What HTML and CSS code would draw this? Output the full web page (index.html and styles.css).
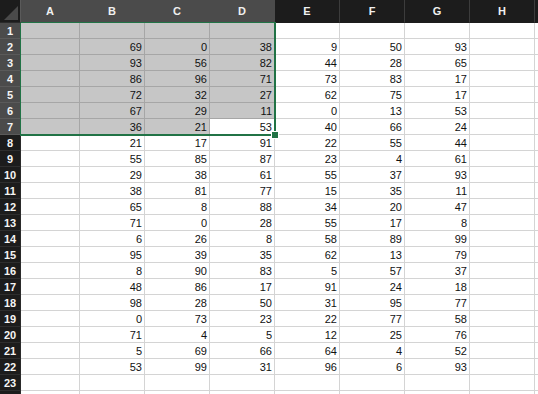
FILE: index.html
```html
<!DOCTYPE html>
<html lang="en">
<head>
    <meta charset="UTF-8">
    <meta name="viewport" content="width=device-width, initial-scale=1.0">
    <title>Sheet1</title>
    <link rel="stylesheet" href="styles.css">
</head>
<body>
    <div class="sheet" id="sheet">
        <!-- selection outline A1:D7 -->
        <div class="selection"></div>
        <div class="handle"></div>
    </div>

    <script>
        const cols = ['A', 'B', 'C', 'D', 'E', 'F', 'G', 'H', ''];
        // values for columns B..G, rows 2..22
        const data = [
            [69, 0, 38, 9, 50, 93],
            [93, 56, 82, 44, 28, 65],
            [86, 96, 71, 73, 83, 17],
            [72, 32, 27, 62, 75, 17],
            [67, 29, 11, 0, 13, 53],
            [36, 21, 53, 40, 66, 24],
            [21, 17, 91, 22, 55, 44],
            [55, 85, 87, 23, 4, 61],
            [29, 38, 61, 55, 37, 93],
            [38, 81, 77, 15, 35, 11],
            [65, 8, 88, 34, 20, 47],
            [71, 0, 28, 55, 17, 8],
            [6, 26, 8, 58, 89, 99],
            [95, 39, 35, 62, 13, 79],
            [8, 90, 83, 5, 57, 37],
            [48, 86, 17, 91, 24, 18],
            [98, 28, 50, 31, 95, 77],
            [0, 73, 23, 22, 77, 58],
            [71, 4, 5, 12, 25, 76],
            [5, 69, 66, 64, 4, 52],
            [53, 99, 31, 96, 6, 93]
        ];
        const sheet = document.getElementById('sheet');

        function cell(cls, text) {
            const div = document.createElement('div');
            div.className = cls;
            if (text !== undefined) div.textContent = text;
            sheet.appendChild(div);
        }

        // header row
        cell('corner');
        cols.forEach((c, i) => cell(i < 4 ? 'colhead hsel' : 'colhead', c));

        // body rows (24 is only a sliver at the bottom edge)
        for (let r = 1; r <= 24; r++) {
            cell(r <= 7 ? 'rowhead hsel' : 'rowhead', r < 24 ? r : '');
            cols.forEach((c, i) => {
                const row = data[r - 2];
                let value = '';
                if (row && i >= 1 && i <= 6) value = row[i - 1];
                const selected = r <= 7 && i < 4 && !(r === 7 && i === 3);
                cell(selected ? 'cell sel' : 'cell', value);
            });
        }
    </script>
</body>
</html>
```

FILE: styles.css
```css
body {
    margin: 0;
    background: #fff;
    overflow: hidden;
    font-family: "Liberation Sans", Arial, sans-serif;
}

.sheet {
    position: relative;
    display: grid;
    grid-template-columns: 21px 59px repeat(8, 65px);
    grid-template-rows: 23px;
    grid-auto-rows: 16px;
    font-size: 11px;
}

.corner {
    position: relative;
    background: #1c1c1c;
    border-right: 1px solid #5a5a5a;
    border-bottom: 1px solid #2a2a2a;
}

.corner::after {
    content: "";
    position: absolute;
    right: 2px;
    bottom: 2px;
    width: 14px;
    height: 14px;
    background: #4a4a4a;
    clip-path: polygon(100% 0, 100% 100%, 0 100%);
}

.colhead {
    background: #1c1c1c;
    color: #f0f0f0;
    font-weight: bold;
    font-size: 11px;
    display: flex;
    align-items: center;
    justify-content: center;
    border-right: 1px solid #3c3c3c;
    border-bottom: 1px solid #1c1c1c;
}

.colhead.hsel {
    background: #4b4b4b;
    border-right-color: #4b4b4b;
    border-bottom-color: #217346;
}

.rowhead {
    background: #1c1c1c;
    color: #f4f4f4;
    font-weight: bold;
    font-size: 11px;
    display: flex;
    align-items: center;
    justify-content: center;
    border-right: 1px solid #2a2a2a;
    border-bottom: 1px solid #2e2e2e;
}

.rowhead.hsel {
    background: #4b4b4b;
    border-right-color: #217346;
    border-bottom-color: #5a5a5a;
}

.cell {
    color: #111;
    text-align: right;
    padding-right: 2px;
    line-height: 16px;
    border-right: 1px solid #d4d4d4;
    border-bottom: 1px solid #d4d4d4;
}

.cell.sel {
    background: #c6c6c6;
    border-right-color: #a6a6a6;
    border-bottom-color: #a6a6a6;
}

.selection {
    position: absolute;
    left: 20px;
    top: 22px;
    width: 253px;
    height: 111px;
    border: 2px solid #217346;
    border-left-width: 1px;
    border-top-width: 1px;
    pointer-events: none;
}

.handle {
    position: absolute;
    left: 271px;
    top: 131px;
    width: 6px;
    height: 6px;
    background: #217346;
    border: 1px solid #fff;
}
```
